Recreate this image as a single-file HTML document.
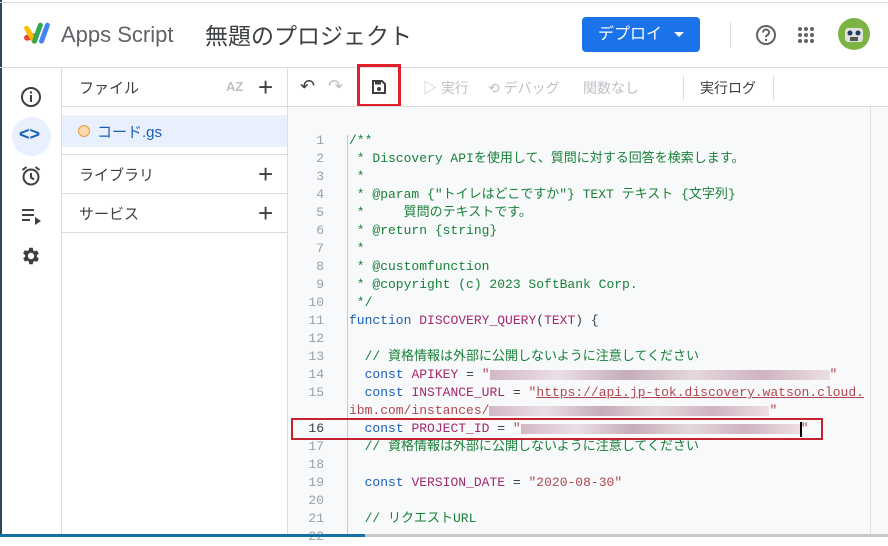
<!DOCTYPE html>
<html><head><meta charset="utf-8"><style>
*{box-sizing:border-box;margin:0;padding:0}
body{width:888px;height:537px;overflow:hidden;background:#fff;font-family:"Liberation Sans","Noto Sans CJK JP",sans-serif;position:relative;color:#3c4043}
.a{position:absolute}
.code{font-family:"Liberation Mono","Noto Sans CJK JP",monospace;font-size:13px;white-space:pre;line-height:18px}
.ln{position:absolute;left:288px;width:36px;text-align:right;color:#9aa0a6;font-family:"Liberation Mono",monospace;font-size:13px;line-height:18px}
.cm{color:#188038}.kw{color:#1a5fb4}.id{color:#a3296e}.st{color:#b0474e}.pl{color:#3c4043}
.blur{display:inline-block;height:10px;background:linear-gradient(90deg,#c8a8b8,#e8d8e0,#b89aa8,#e0cfd6,#c4a2b2,#ead8df);opacity:.8;vertical-align:middle}
</style></head><body>
<div class="a" style="left:0;top:0;width:2px;height:537px;background:#2b4a55"></div>
<div class="a" style="left:0;top:2px;width:888px;height:1px;background:#dadce0"></div>
<svg class="a" style="left:22px;top:20px" width="36" height="28" viewBox="0 0 36 28">
<rect x="2" y="14" width="14" height="6" rx="3" fill="#ea4335" transform="rotate(-10 9 17)"/>
<rect x="6" y="5" width="5" height="20" rx="2.5" fill="#fbbc04" transform="rotate(-30 8 15)"/>
<rect x="13" y="2" width="5" height="22" rx="2.5" fill="#34a853" transform="rotate(20 15 13)"/>
<rect x="20" y="2" width="5" height="22" rx="2.5" fill="#4285f4" transform="rotate(20 22 13)"/>
</svg>
<div class="a" style="left:61px;top:22px;font-size:22px;color:#5f6368">Apps Script</div>
<div class="a" style="left:205px;top:17px;font-size:23px;color:#3c4043">無題のプロジェクト</div>
<div class="a" style="left:582px;top:17px;width:118px;height:35px;background:#1a73e8;border-radius:4px;color:#fff;font-size:16px;line-height:35px;padding-left:16px">デプロイ<span style="position:absolute;left:92px;top:15px;border:5px solid transparent;border-top-color:#fff;border-bottom:0"></span></div>
<div class="a" style="left:730px;top:22px;width:1px;height:26px;background:#dadce0"></div>
<svg class="a" style="left:755px;top:24px" width="22" height="22" viewBox="0 0 22 22"><circle cx="11" cy="11" r="9" fill="none" stroke="#5f6368" stroke-width="2"/><path d="M8 8.5a3 3 0 1 1 4 2.8c-1 .4-1 1.2-1 2" fill="none" stroke="#5f6368" stroke-width="2"/><circle cx="11" cy="16" r="1.2" fill="#5f6368"/></svg>
<svg class="a" style="left:797px;top:26px" width="18" height="18" viewBox="0 0 18 18" fill="#5f6368"><circle cx="3" cy="3" r="2"/><circle cx="9" cy="3" r="2"/><circle cx="15" cy="3" r="2"/><circle cx="3" cy="9" r="2"/><circle cx="9" cy="9" r="2"/><circle cx="15" cy="9" r="2"/><circle cx="3" cy="15" r="2"/><circle cx="9" cy="15" r="2"/><circle cx="15" cy="15" r="2"/></svg>
<svg class="a" style="left:838px;top:18px" width="32" height="32" viewBox="0 0 32 32"><circle cx="16" cy="16" r="16" fill="#7cb342"/><rect x="7" y="10" width="18" height="14" rx="3" fill="#e0e0e0"/><circle cx="12" cy="15" r="2.5" fill="#1e3a5f"/><circle cx="20" cy="15" r="2.5" fill="#1e3a5f"/><rect x="12" y="19" width="8" height="4" fill="#555"/></svg>
<div class="a" style="left:0;top:67px;width:888px;height:1px;background:#dadce0"></div>
<svg class="a" style="left:20px;top:86px" width="22" height="22" viewBox="0 0 22 22"><circle cx="11" cy="11" r="9" fill="none" stroke="#3c4043" stroke-width="2"/><rect x="10" y="9" width="2" height="7" fill="#3c4043"/><circle cx="11" cy="6.5" r="1.2" fill="#3c4043"/></svg>
<div class="a" style="left:12px;top:117px;width:39px;height:39px;border-radius:50%;background:#e8f0fe"></div>
<div class="a" style="left:19px;top:124px;font-size:18px;font-weight:bold;color:#1a5fb4">&lt;&gt;</div>
<svg class="a" style="left:20px;top:165px" width="22" height="22" viewBox="0 0 22 22"><circle cx="11" cy="12" r="7.5" fill="none" stroke="#3c4043" stroke-width="2"/><path d="M11 8v4.5l3 2M2.5 5l4-3M19.5 5l-4-3" fill="none" stroke="#3c4043" stroke-width="2"/></svg>
<svg class="a" style="left:21px;top:207px" width="22" height="18" viewBox="0 0 22 18"><path d="M1 3h12M1 8h12M1 13h8" stroke="#3c4043" stroke-width="2"/><path d="M14 10l6 4-6 4z" fill="#3c4043"/></svg>
<svg class="a" style="left:20px;top:245px" width="22" height="22" viewBox="0 0 24 24"><path fill="#3c4043" d="M19.4 13a7.5 7.5 0 0 0 0-2l2.1-1.6-2-3.5-2.5 1a7 7 0 0 0-1.7-1L15 3h-4l-.4 2.6a7 7 0 0 0-1.7 1l-2.5-1-2 3.5L6.6 11a7.5 7.5 0 0 0 0 2l-2.1 1.6 2 3.5 2.5-1a7 7 0 0 0 1.7 1L11 21h4l.4-2.6a7 7 0 0 0 1.7-1l2.5 1 2-3.5zM13 15.5a3.5 3.5 0 1 1 0-7 3.5 3.5 0 0 1 0 7z" transform="translate(-1 0)"/></svg>
<div class="a" style="left:61px;top:68px;width:1px;height:469px;background:#dadce0"></div>
<div class="a" style="left:79px;top:77px;font-size:15px">ファイル</div>
<div class="a" style="left:226px;top:79px;font-size:13px;font-weight:bold;color:#bdc1c6">AZ</div>
<div class="a" style="left:258px;top:72px;font-size:26px;font-weight:300;color:#3c4043">+</div>
<div class="a" style="left:62px;top:106px;width:226px;height:1px;background:#dadce0"></div>
<div class="a" style="left:62px;top:115px;width:226px;height:32px;background:#e8f0fe"></div>
<div class="a" style="left:78px;top:125px;width:12px;height:12px;border-radius:50%;background:#fcd9a8;border:1px solid #e59b3d"></div>
<div class="a" style="left:97px;top:121px;font-size:15px;color:#1a5fb4">コード.gs</div>
<div class="a" style="left:62px;top:154px;width:226px;height:1px;background:#dadce0"></div>
<div class="a" style="left:79px;top:164px;font-size:15px">ライブラリ</div>
<div class="a" style="left:258px;top:159px;font-size:26px;font-weight:300">+</div>
<div class="a" style="left:62px;top:193px;width:226px;height:1px;background:#dadce0"></div>
<div class="a" style="left:79px;top:203px;font-size:15px">サービス</div>
<div class="a" style="left:258px;top:198px;font-size:26px;font-weight:300">+</div>
<div class="a" style="left:62px;top:232px;width:226px;height:1px;background:#dadce0"></div>
<div class="a" style="left:287px;top:68px;width:1px;height:469px;background:#dadce0"></div>
<div class="a" style="left:300px;top:76px;font-size:18px;color:#3c4043">↶</div>
<div class="a" style="left:328px;top:76px;font-size:18px;color:#bdc1c6">↷</div>
<svg class="a" style="left:371px;top:79px" width="16" height="16" viewBox="0 0 16 16"><path d="M2 2h9l3 3v9H2z" fill="none" stroke="#3c4043" stroke-width="2"/><circle cx="8" cy="10" r="2" fill="#3c4043"/><rect x="4" y="3" width="6" height="2.5" fill="#3c4043"/></svg>
<div class="a" style="left:357px;top:64px;width:44px;height:43px;border:3px solid #e0202a"></div>
<div class="a" style="left:423px;top:78px;font-size:14px;color:#bdc1c6">▷ 実行</div>
<div class="a" style="left:488px;top:78px;font-size:14px;color:#bdc1c6">⟲ デバッグ</div>
<div class="a" style="left:583px;top:78px;font-size:14px;color:#bdc1c6">関数なし</div>
<div class="a" style="left:683px;top:76px;width:1px;height:24px;background:#dadce0"></div>
<div class="a" style="left:700px;top:78px;font-size:14px;color:#3c4043">実行ログ</div>
<div class="a" style="left:773px;top:76px;width:1px;height:24px;background:#dadce0"></div>
<div class="a" style="left:288px;top:106px;width:600px;height:1px;background:#dadce0"></div>
<div class="a" style="left:288px;top:107px;width:600px;height:427px;background:#f8f9fa"></div>
<div class="a" style="left:870px;top:107px;width:1px;height:427px;background:#e0e0e0"></div>
<div class="a" style="left:347px;top:135px;width:1px;height:400px;background:#c8c8c8"></div>
<div class="a" style="left:288px;top:132px">
<div class="ln" style="left:0;top:0">1</div><div class="ln" style="left:0;top:18px">2</div><div class="ln" style="left:0;top:36px">3</div><div class="ln" style="left:0;top:54px">4</div><div class="ln" style="left:0;top:72px">5</div><div class="ln" style="left:0;top:90px">6</div><div class="ln" style="left:0;top:108px">7</div><div class="ln" style="left:0;top:126px">8</div><div class="ln" style="left:0;top:144px">9</div><div class="ln" style="left:0;top:162px">10</div><div class="ln" style="left:0;top:180px">11</div><div class="ln" style="left:0;top:198px">12</div><div class="ln" style="left:0;top:216px">13</div><div class="ln" style="left:0;top:234px">14</div><div class="ln" style="left:0;top:252px">15</div><div class="ln" style="left:0;top:288px;color:#3c4043">16</div><div class="ln" style="left:0;top:306px">17</div><div class="ln" style="left:0;top:324px">18</div><div class="ln" style="left:0;top:342px">19</div><div class="ln" style="left:0;top:360px">20</div><div class="ln" style="left:0;top:378px">21</div><div class="ln" style="left:0;top:396px">22</div>
</div>
<div class="a code" style="left:349px;top:132px"><span class="cm">/**
 * Discovery APIを使用して、質問に対する回答を検索します。
 *
 * @param {"トイレはどこですか"} TEXT テキスト {文字列}
 *     質問のテキストです。
 * @return {string}
 *
 * @customfunction
 * @copyright (c) 2023 SoftBank Corp.
 */</span>
<span class="kw">function</span> <span class="id">DISCOVERY_QUERY</span><span class="pl">(</span><span class="id">TEXT</span><span class="pl">) {</span>

<span class="cm">  // 資格情報は外部に公開しないように注意してください</span>
  <span class="kw">const</span> <span class="id">APIKEY</span> <span class="pl">=</span> <span class="st">"<span class="blur" style="width:340px"></span>"</span>
  <span class="kw">const</span> <span class="id">INSTANCE_URL</span> <span class="pl">=</span> <span class="st">"<u>https://api.jp-tok.discovery.watson.cloud.</u></span>
<span class="st">ibm.com/instances/<span class="blur" style="width:280px"></span>"</span>
  <span class="kw">const</span> <span class="id">PROJECT_ID</span> <span class="pl">=</span> <span class="st">"<span class="blur" style="width:280px"></span>"</span>
<span class="cm">  // 資格情報は外部に公開しないように注意してください</span>

  <span class="kw">const</span> <span class="id">VERSION_DATE</span> <span class="pl">=</span> <span class="st">"2020-08-30"</span>

<span class="cm">  // リクエストURL</span></div>
<div class="a" style="left:291px;top:418px;width:532px;height:22px;border:2px solid #c8232c"></div>
<div class="a" style="left:800px;top:422px;width:2px;height:15px;background:#000"></div>
<div class="a" style="left:0;top:534px;width:365px;height:3px;background:#1570a6"></div>
<div class="a" style="left:365px;top:534px;width:523px;height:3px;background:#c8c8c8"></div>
</body></html>
